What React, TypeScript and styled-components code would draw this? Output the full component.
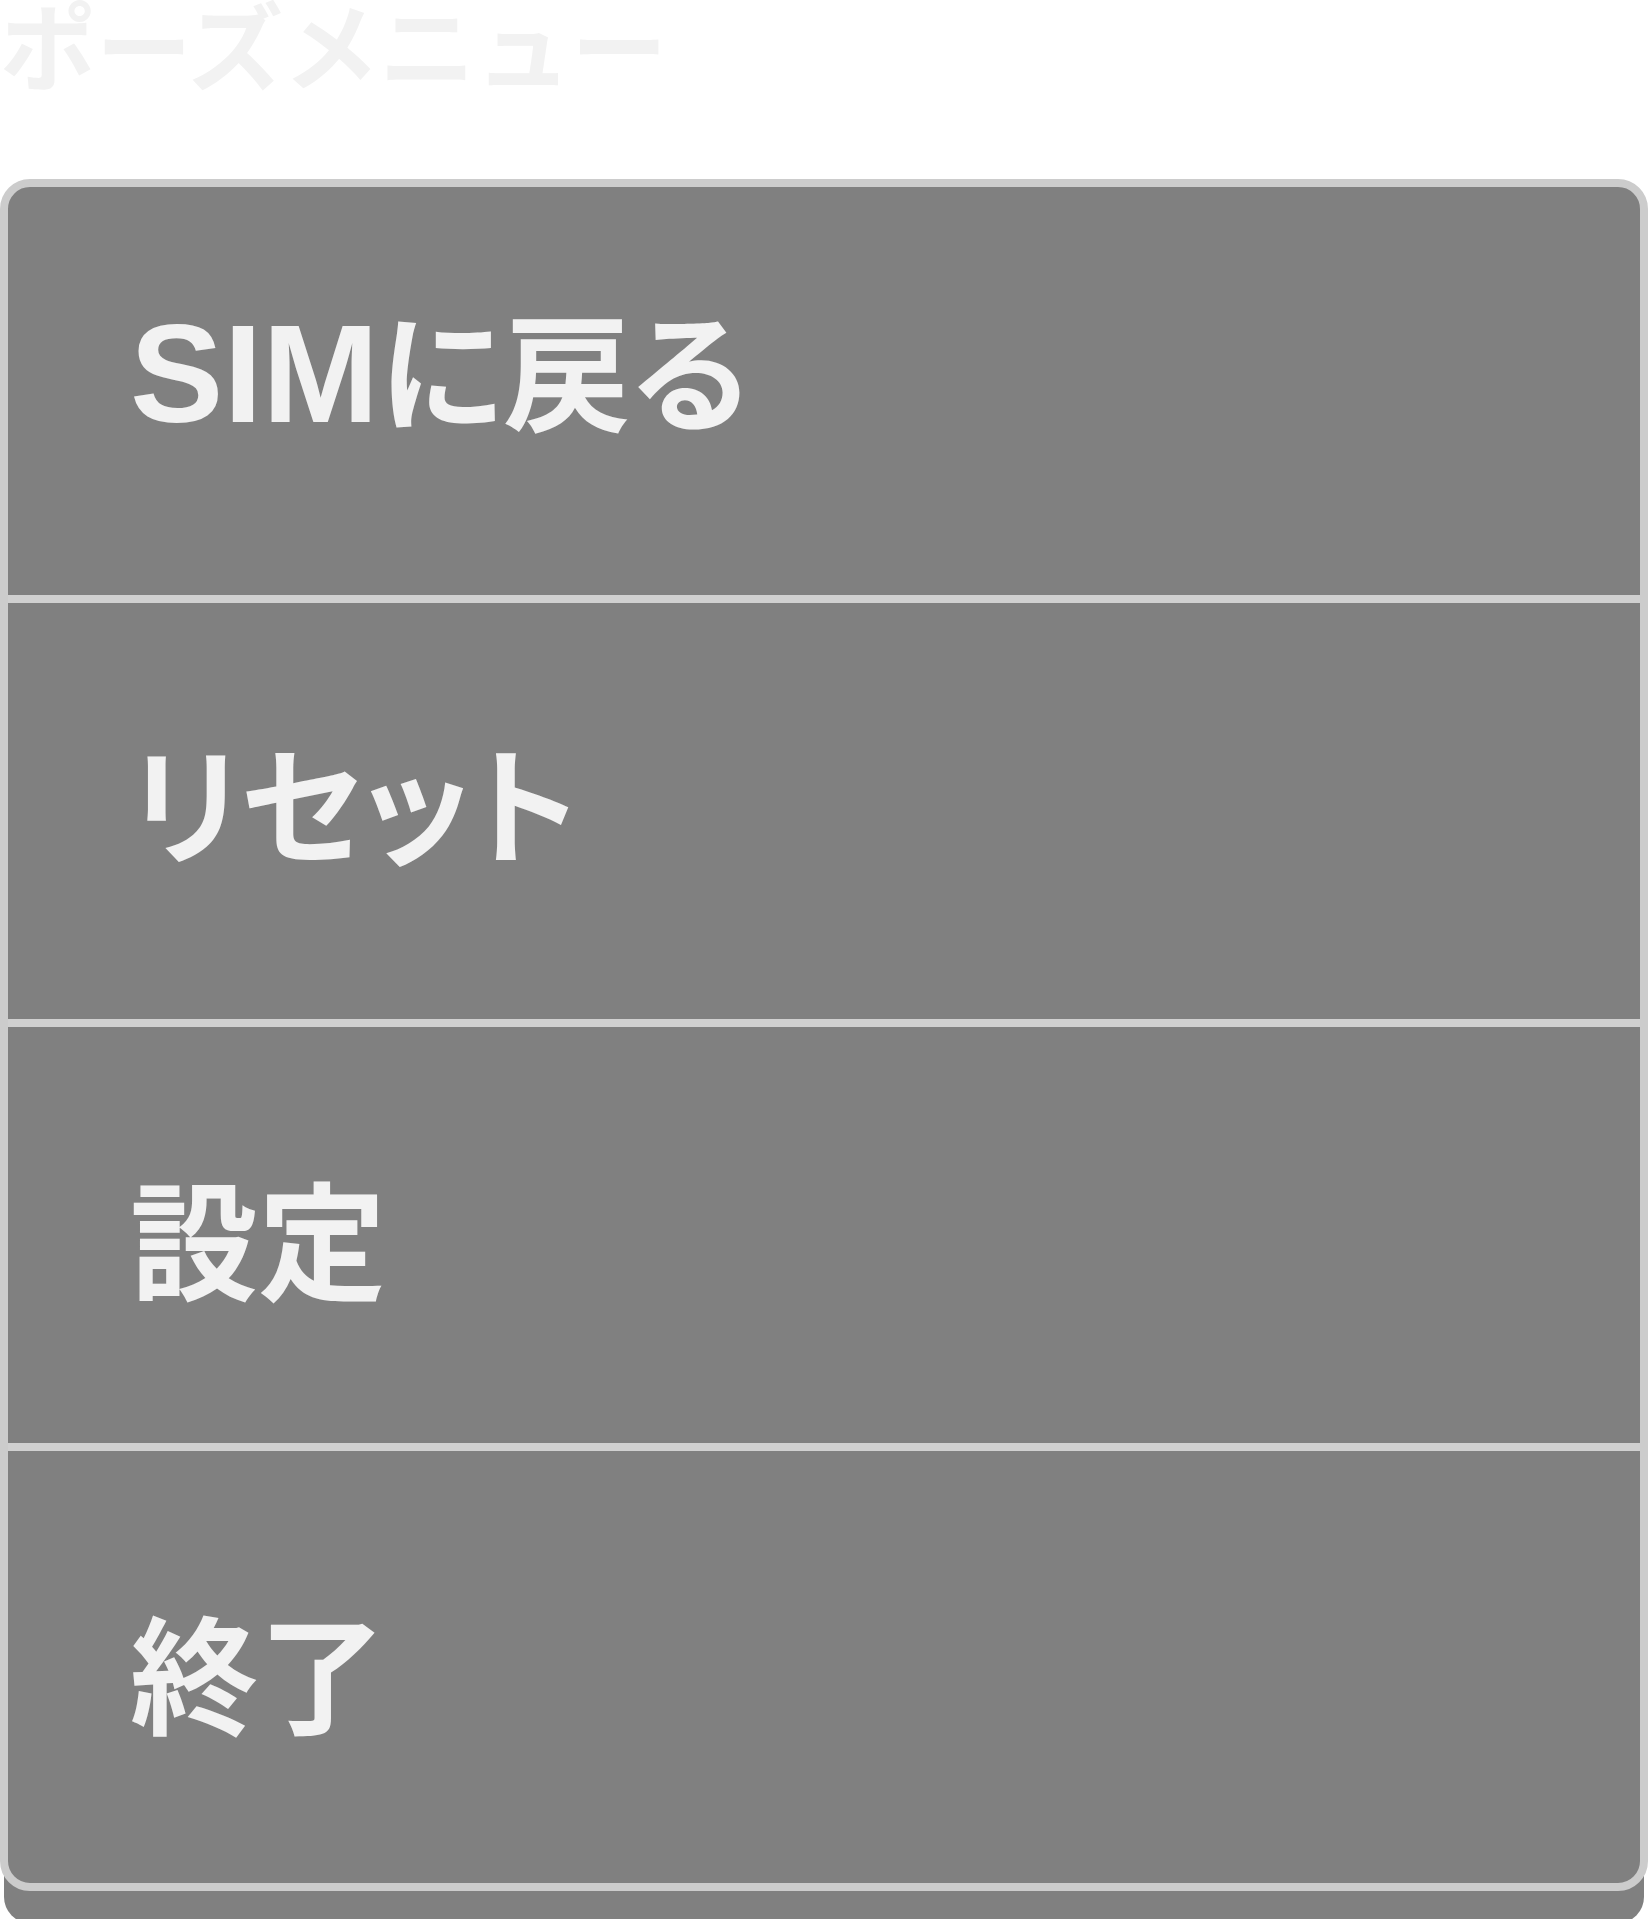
import React from "react";
import styled, { createGlobalStyle } from "styled-components";

const GlobalStyle = createGlobalStyle`
  html, body {
    margin: 0;
    padding: 0;
    background: #ffffff;
  }
  body {
    font-family: "Noto Sans CJK JP", "Noto Sans", sans-serif;
  }
`;

const Page = styled.div`
  display: flex;
  flex-direction: column;
  width: 1648px;
  padding-bottom: 60px;
`;

const Title = styled.h1`
  margin: 0 0 95px 0;
  font-size: 96px;
  line-height: 84px;
  font-weight: 700;
  color: #f2f2f2;
  white-space: nowrap;
`;

const Menu = styled.ul`
  list-style: none;
  margin: 0;
  padding: 0;
  display: flex;
  flex-direction: column;
  border: 8px solid #cccccc;
  border-radius: 30px;
  background: #808080;
  box-shadow: 0 36px 0 -4px #808080;
  overflow: hidden;
`;

const Item = styled.li<{ $height: number; $top: number }>`
  display: flex;
  align-items: flex-start;
  box-sizing: content-box;
  height: ${(p) => p.$height - p.$top}px;
  padding: ${(p) => p.$top}px 0 0 122px;
  & + & {
    border-top: 8px solid #d0d0d0;
  }
`;

const Label = styled.span`
  font-size: 128px;
  line-height: 1;
  font-weight: 700;
  color: #f2f2f2;
  white-space: nowrap;
  font-feature-settings: "palt";
`;

const Latin = styled.span`
  font-family: "Liberation Sans", Arial, sans-serif;
  font-size: 140px;
`;

const items = [
  { key: "back", latin: "SIM", label: "に戻る", height: 408, top: 116 },
  { key: "reset", latin: "", label: "リセット", height: 416, top: 133 },
  { key: "settings", latin: "", label: "設定", height: 416, top: 145 },
  { key: "quit", latin: "", label: "終了", height: 432, top: 155 },
];

const App: React.FC = () => {
  return (
    <Page>
      <GlobalStyle />
      <Title>ポーズメニュー</Title>
      <Menu>
        {items.map((item) => (
          <Item key={item.key} $height={item.height} $top={item.top}>
            <Label>
              {item.latin && <Latin>{item.latin}</Latin>}
              {item.label}
            </Label>
          </Item>
        ))}
      </Menu>
    </Page>
  );
};

export default App;
